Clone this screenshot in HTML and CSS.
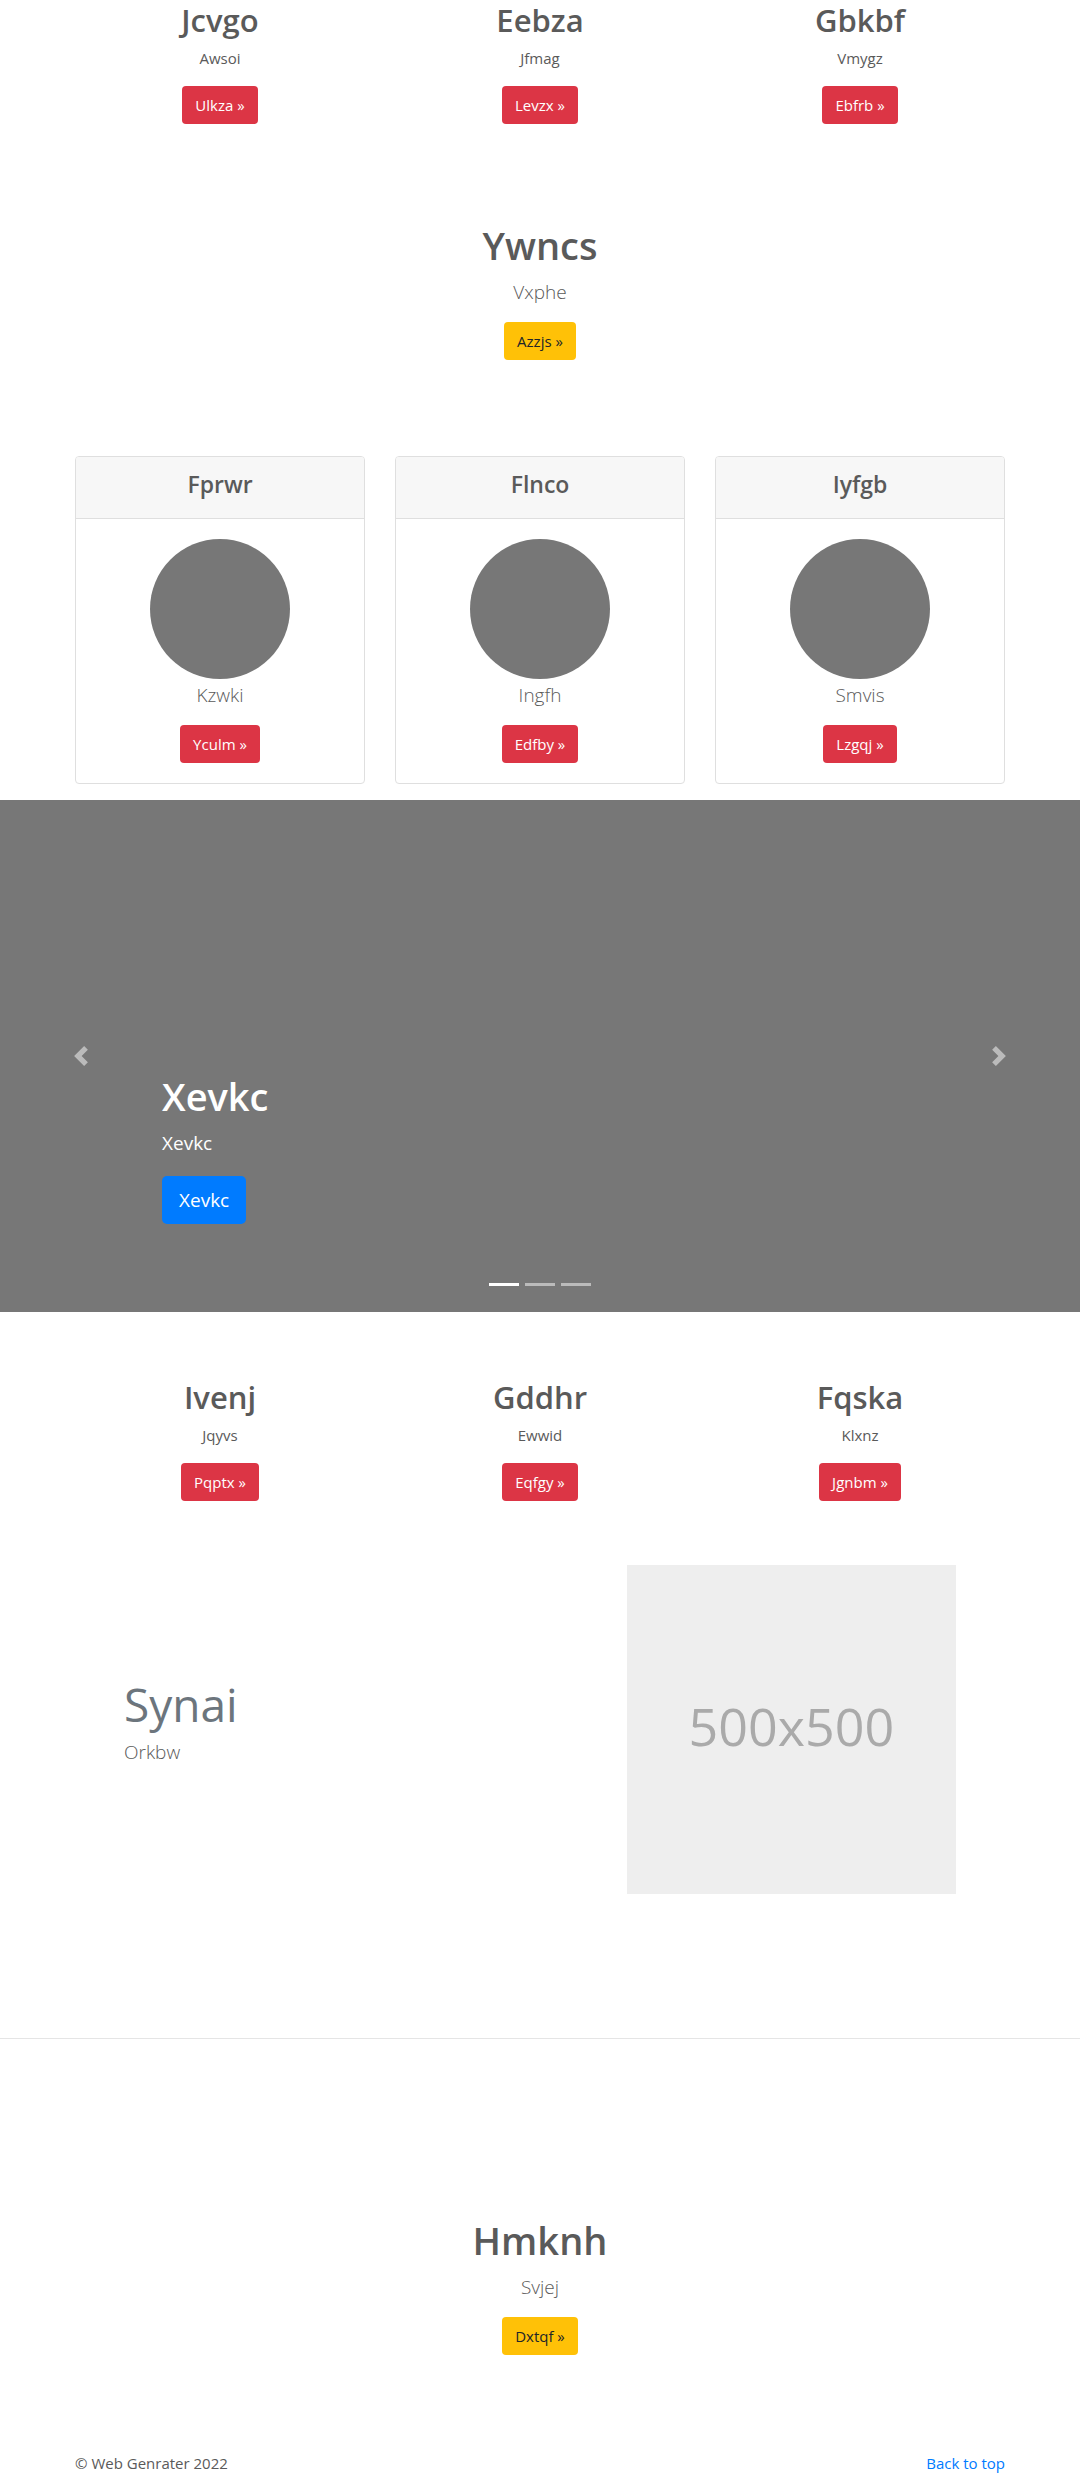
FILE: index.html
```html
<!DOCTYPE html>
<html lang="en">
<head>
<meta charset="utf-8">
<meta name="viewport" content="width=device-width, initial-scale=1">
<title>Web Genrater</title>
<link rel="stylesheet" href="styles.css">
</head>
<body>
<main>
  <section class="container columns">
    <div class="column"><h2 class="title">Jcvgo</h2><p class="text">Awsoi</p><a class="btn btn-danger" href="#">Ulkza »</a></div>
    <div class="column"><h2 class="title">Eebza</h2><p class="text">Jfmag</p><a class="btn btn-danger" href="#">Levzx »</a></div>
    <div class="column"><h2 class="title">Gbkbf</h2><p class="text">Vmygz</p><a class="btn btn-danger" href="#">Ebfrb »</a></div>
  </section>

  <section class="container callout">
    <h1 class="headline">Ywncs</h1>
    <p class="lead">Vxphe</p>
    <a class="btn btn-warning" href="#">Azzjs »</a>
  </section>

  <section class="container columns">
    <article class="card">
      <header class="card-header"><h4 class="card-title">Fprwr</h4></header>
      <div class="card-body"><div class="avatar"></div><p class="lead">Kzwki</p><a class="btn btn-danger" href="#">Yculm »</a></div>
    </article>
    <article class="card">
      <header class="card-header"><h4 class="card-title">Flnco</h4></header>
      <div class="card-body"><div class="avatar"></div><p class="lead">Ingfh</p><a class="btn btn-danger" href="#">Edfby »</a></div>
    </article>
    <article class="card">
      <header class="card-header"><h4 class="card-title">Iyfgb</h4></header>
      <div class="card-body"><div class="avatar"></div><p class="lead">Smvis</p><a class="btn btn-danger" href="#">Lzgqj »</a></div>
    </article>
  </section>

  <section class="carousel" aria-label="Highlights">
    <button class="control" type="button" aria-label="Previous">
      <svg class="arrow" viewBox="0 0 8 8" aria-hidden="true"><path d="M5.25 0l-4 4 4 4 1.5-1.5L4.25 4l2.5-2.5L5.25 0z"/></svg>
    </button>
    <div class="slide">
      <div class="caption">
        <h1 class="headline">Xevkc</h1>
        <p class="caption-text">Xevkc</p>
        <a class="btn btn-primary" href="#">Xevkc</a>
      </div>
      <div class="indicators">
        <button class="indicator active" type="button" aria-label="Slide 1"></button>
        <button class="indicator" type="button" aria-label="Slide 2"></button>
        <button class="indicator" type="button" aria-label="Slide 3"></button>
      </div>
    </div>
    <button class="control" type="button" aria-label="Next">
      <svg class="arrow" viewBox="0 0 8 8" aria-hidden="true"><path d="M2.75 0l-1.5 1.5L3.75 4l-2.5 2.5L2.75 8l4-4-4-4z"/></svg>
    </button>
  </section>

  <section class="container columns after-carousel">
    <div class="column"><h2 class="title">Ivenj</h2><p class="text">Jqyvs</p><a class="btn btn-danger" href="#">Pqptx »</a></div>
    <div class="column"><h2 class="title">Gddhr</h2><p class="text">Ewwid</p><a class="btn btn-danger" href="#">Eqfgy »</a></div>
    <div class="column"><h2 class="title">Fqska</h2><p class="text">Klxnz</p><a class="btn btn-danger" href="#">Jgnbm »</a></div>
  </section>

  <section class="container">
    <div class="feature">
      <div class="feature-copy"><h2 class="feature-title">Synai</h2><p class="lead">Orkbw</p></div>
      <div class="feature-media"><div class="placeholder">500x500</div></div>
    </div>
  </section>

  <hr class="divider">

  <section class="container closing">
    <h1 class="headline">Hmknh</h1>
    <p class="lead">Svjej</p>
    <a class="btn btn-warning" href="#">Dxtqf »</a>
  </section>
</main>

<footer class="container footer">
  <p class="copyright">© Web Genrater 2022</p>
  <a class="top-link" href="#">Back to top</a>
</footer>
</body>
</html>
```

FILE: styles.css
```css
* {
  box-sizing: border-box;
}

body {
  margin: 0;
  background: #fff;
  color: #5a5a5a;
  font-family: "Open Sans", "Noto Sans", sans-serif;
  font-size: 15px;
  line-height: 24px;
}

h1, h2, h4, p {
  margin: 0;
}

.container {
  width: 100%;
  max-width: 960px;
  margin: 0 auto;
  padding: 0 15px;
}

.columns {
  display: grid;
  grid-template-columns: repeat(3, 1fr);
  gap: 30px;
}

.column,
.callout,
.closing {
  text-align: center;
}

.title {
  margin-bottom: 6px;
  font-size: 31px;
  line-height: 40px;
  font-weight: 600;
}

.text {
  margin-bottom: 16px;
}

.headline {
  margin-bottom: 8px;
  font-size: 38px;
  line-height: 48px;
  font-weight: 600;
}

.lead {
  margin-bottom: 15px;
  font-size: 19px;
  line-height: 30px;
  font-weight: 300;
}

.btn {
  display: inline-block;
  padding: 6px 12px;
  border: 1px solid transparent;
  border-radius: 4px;
  color: #fff;
  text-decoration: none;
  vertical-align: top;
}

.btn-danger {
  background: #dc3545;
}

.btn-warning {
  background: #ffc107;
  color: #212529;
}

.btn-primary {
  padding: 8px 16px;
  border-radius: 5px;
  background: #007bff;
  font-size: 19px;
  line-height: 30px;
}

.callout {
  padding-top: 97px;
  padding-bottom: 96px;
}

.card {
  border: 1px solid #dfdfdf;
  border-radius: 4px;
  text-align: center;
  overflow: hidden;
}

.card-header {
  padding: 13px 20px 19px;
  border-bottom: 1px solid #dfdfdf;
  background: #f7f7f7;
}

.card-title {
  font-size: 23px;
  line-height: 29px;
  font-weight: 600;
}

.card-body {
  padding: 20px;
}

.avatar {
  width: 140px;
  height: 140px;
  margin: 0 auto 1px;
  border-radius: 50%;
  background: #777;
}

.carousel {
  display: grid;
  grid-template-columns: 15% 1fr 15%;
  min-height: 512px;
  margin-top: 16px;
  background: #777;
  color: #fff;
}

.control {
  display: flex;
  align-items: center;
  justify-content: center;
  padding: 0;
  border: 0;
  background: none;
  opacity: 0.5;
  cursor: pointer;
}

.arrow {
  width: 20px;
  height: 20px;
  fill: #fff;
}

.slide {
  display: flex;
  flex-direction: column;
  justify-content: flex-end;
  padding-bottom: 26px;
}

.caption-text {
  margin-bottom: 18px;
  font-size: 19px;
  line-height: 30px;
}

.indicators {
  display: flex;
  justify-content: center;
  gap: 6px;
  margin-top: 59px;
}

.indicator {
  width: 30px;
  height: 3px;
  padding: 0;
  border: 0;
  background: #fff;
  opacity: 0.5;
  cursor: pointer;
}

.indicator.active {
  opacity: 1;
}

.after-carousel {
  padding-top: 65px;
}

.feature {
  display: grid;
  grid-template-columns: 7fr 5fr;
  padding: 64px 34px 0;
}

.feature-copy,
.feature-media {
  padding: 0 15px;
}

.feature-title {
  margin: 114px 0 8px;
  color: #6c757d;
  font-size: 46px;
  line-height: 50px;
  font-weight: 400;
}

.placeholder {
  display: flex;
  align-items: center;
  justify-content: center;
  aspect-ratio: 1;
  padding-bottom: 8px;
  background: #eee;
  color: #aaa;
  font-size: 52px;
  line-height: 64px;
}

.divider {
  margin: 144px 0 0;
  border: 0;
  border-top: 1px solid #e5e5e5;
}

.closing {
  padding-top: 177px;
  padding-bottom: 96px;
}

.footer {
  display: flex;
  justify-content: space-between;
}

.top-link {
  color: #007bff;
  text-decoration: none;
}
```
